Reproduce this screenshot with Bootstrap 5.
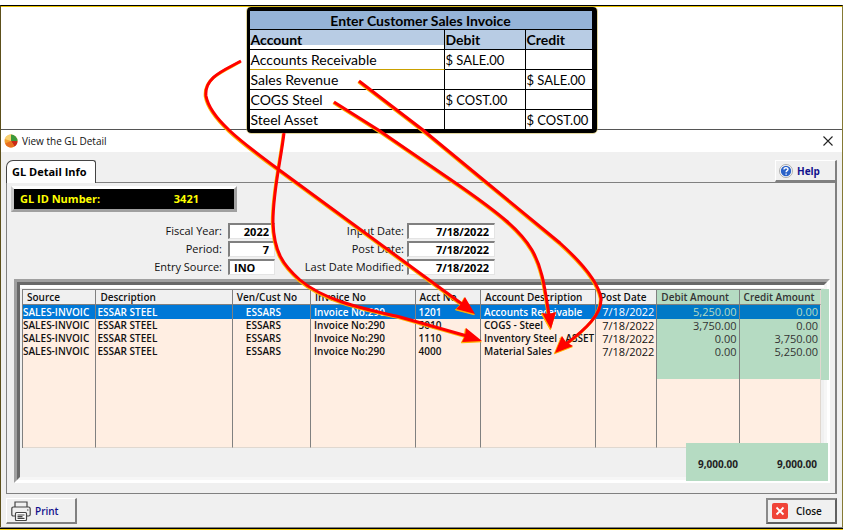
<!DOCTYPE html>
<html lang="en">
<head>
<meta charset="utf-8">
<meta name="viewport" content="width=device-width, initial-scale=1">
<title>View the GL Detail</title>
<link href="https://cdn.jsdelivr.net/npm/bootstrap@5.3.0/dist/css/bootstrap.min.css" rel="stylesheet">
<style>
body{font-family:"Open Sans","Noto Sans",sans-serif;font-size:11px;line-height:14px;color:#111;background:#fff}
.page{margin-top:5px;border-top:1px solid #000;border-left:1px solid #5c4f1a;border-right:1px solid #857a35;box-shadow:inset 0 1px #e8c000}
.page-end{height:3px;background:#000;border-top:1px solid #808080;border-bottom:1px solid #f0c800}
/* journal entry sheet */
.sheet{width:350px;border:solid #000;border-width:4px 5px 4px 3px;border-radius:4px;margin:1px auto -4px;position:relative;z-index:2;background:#fff;outline:1px solid #c8b04080}
.sheet table{font-family:Lato,sans-serif;font-size:14px;line-height:18px;color:#000;table-layout:fixed;border-collapse:separate;border-spacing:0}
.sheet th,.sheet td{height:20px;padding:1px 1px 0 1px;border-right:1px solid #000;border-bottom:1px solid #000;white-space:nowrap}
.sheet td+td{font-size:13px}
.sheet tr>:last-child{border-right:0}
.sheet tbody tr:last-child td{border-bottom:0;height:19px}
.sheet .title-row th{height:19px;line-height:17px;background:#95b3d7;text-align:center}
.sheet .head-row th{background:#b8cce4}
.sheet .head-row th:first-child{background:linear-gradient(#b8cce4 15px,#fff 15px)}
.sheet .gold td:first-child{border-bottom-color:#c9a000}
/* window */
.win{background:#f0f0f0;border-top:1px solid #555;padding-bottom:3px}
.titlebar{background:#fff;height:22px;padding:0 9px 0 3px;font-size:10px}
.win-body{padding:4px 5px 0}
.bare{border:0;background:none;padding:0;line-height:0}
.tabs{border:0;margin-bottom:-1px}
.tabs .nav-link{border:1px solid #444!important;border-bottom:0!important;border-radius:7px 3px 0 0;background:#fff!important;color:#000!important;font-weight:700;font-size:11px;line-height:16px;padding:3px 8px 4px 5px;height:23px;margin:0}
.tool{background:#f0f0f0;border:1px solid #fff;border-right:2px solid #808080;border-bottom:2px solid #808080;color:#10108c;font-weight:600;font-size:10px;line-height:14px;border-radius:0;white-space:nowrap}
.help{width:62px;height:22px;padding:0 3px;font-weight:700}
.print{width:71px;height:26px;padding:0 4px}
.close-tool{width:71px;height:26px;padding:0 4px;border:2px solid #8a8a8a;border-right-color:#606060;border-bottom-color:#606060;color:#111}
.panel{border:1px solid #808080;border-right-width:2px;padding:3px 5px 10px 6px}
.gl-id{width:226px;border:3px solid #a0a0a0;border-top-color:#fff;border-left-color:#c8c8c8;background:#a0a0a0;margin-left:-2px}
.gl-id div{background:#000;color:#ff0;font-weight:700;font-size:11px;height:20px;line-height:20px;padding:0 35px 0 6px}
.fields{display:grid;grid-template-columns:215px 47px 132px 88px;gap:2px 0;padding-top:11px;align-items:center}
.fields label{text-align:right;padding-right:6px;font-size:11px;line-height:16px;white-space:nowrap}
.fields label.late{padding-right:3px}
.fields input{width:100%;height:16px;border:1px solid #e4e4e4;border-top:2px solid #808080;border-left:2px solid #808080;border-radius:0;background:#fff;font-weight:700;font-size:11px;line-height:13px;padding:0 5px;color:#000;text-align:right}
.fields input.src{text-align:left;padding:0 4px}
.frame-a{border:3px solid #a0a0a0;border-right-color:#fff;border-bottom-color:#fff;margin-top:4px;margin-left:1px}
.frame-b{border:3px solid #696969;border-right-color:#f6f6f6;border-bottom-color:#f6f6f6;padding:4px 3px 29px 2px;position:relative;box-shadow:inset 0 3px #fff}
.ledger{table-layout:fixed;border-collapse:separate;border-spacing:0;border-top:1px solid #808080;border-left:1px solid #808080;position:relative;z-index:1;font-weight:600;font-size:10px;color:#111}
.ledger th,.ledger td{padding:0 1px 0 3px;border-right:1px solid #808080;white-space:nowrap;height:13px;line-height:13px;background:#ffeee2}
.ledger td:first-child{padding:0}
.ledger td:nth-child(2){padding-left:1px}
.ledger th{height:15px;line-height:14px;background:#f0f0f0;font-weight:600;padding-left:4px;border-bottom:1px solid #808080}
.ledger .num{text-align:right;font-size:11px;font-weight:500;padding-right:2px}
.ledger .hl{background:#b5dbc2;color:#333}
.ledger tr>:last-child{border-right-color:#e0d8d0}
.ledger .sel td{height:14px;line-height:14px;background:#0078d7;color:#fff}
.ledger .sel .hl{background:#0079c6;color:#b5dbc2}
.ledger .cust{padding-left:13px}
.ledger .gap-s td{height:21px}
.ledger .gap-l td{height:69px;border-bottom:1px solid #e0d8d0}
.mark-top{position:absolute;top:4px;right:-5px;width:12px;height:91px;background:#b5dbc2}
.totals{position:absolute;right:-4px;bottom:-4px;width:142px;height:38px;background:#b5dbc2;z-index:2;font-weight:700;font-size:10px;color:#222;padding:4px 11px 0 12px}
.arrows{left:0;top:0;width:100%;height:530px;z-index:5;pointer-events:none}
</style>
<script src="https://cdn.jsdelivr.net/npm/bootstrap@5.3.0/dist/js/bootstrap.bundle.min.js"></script>
</head>
<body class="position-relative">
<div class="page">
  <div class="sheet">
    <table class="w-100">
      <colgroup><col style="width:195px"><col style="width:81px"><col></colgroup>
      <thead>
        <tr class="title-row"><th colspan="3">Enter Customer Sales Invoice</th></tr>
        <tr class="head-row"><th>Account</th><th>Debit</th><th>Credit</th></tr>
      </thead>
      <tbody>
        <tr class="gold"><td>Accounts Receivable</td><td>$ SALE.00</td><td></td></tr>
        <tr><td>Sales Revenue</td><td></td><td>$ SALE.00</td></tr>
        <tr><td>COGS Steel</td><td>$ COST.00</td><td></td></tr>
        <tr><td>Steel Asset</td><td></td><td>$ COST.00</td></tr>
      </tbody>
    </table>
  </div>
  <main class="win">
    <header class="titlebar d-flex align-items-center">
      <svg width="14" height="14" viewBox="0 0 14 14" aria-hidden="true"><circle cx="7" cy="7" r="6.5" fill="#f4a030"/><path d="M7 7V.5A6.500 6.500 0 0 0 .8 5z" fill="#f8d070"/><path d="M7 7V.5A6.500 6.500 0 0 1 13.500 7z" fill="#3c9a3c"/><path d="M7 7h6.500a6.500 6.500 0 0 1-3 5.500z" fill="#c82818"/><path d="M7 7L1 9.500a6.500 6.500 0 0 0 9.500 3z" fill="#e87020"/></svg>
      <span class="ms-1 flex-grow-1">View the GL Detail</span>
      <button type="button" class="bare" aria-label="Close window"><svg width="10" height="10" viewBox="0 0 10 10"><path d="M.5.5l9 9m0-9l-9 9" stroke="#222" stroke-width="1.100"/></svg></button>
    </header>
    <div class="win-body">
      <div class="d-flex justify-content-between pt-1">
        <ul class="nav nav-tabs tabs" role="tablist"><li class="nav-item"><button type="button" role="tab" class="nav-link active">GL Detail Info</button></li></ul>
        <button type="button" class="tool help d-flex align-items-center gap-1">
          <svg width="14" height="14" viewBox="0 0 14 14" aria-hidden="true"><circle cx="7" cy="7" r="6.500" fill="#fff" stroke="#999" stroke-width=".8"/><circle cx="7" cy="7" r="5.200" fill="#2a62c8"/><path d="M5 5.500C5 3.200 9 3.200 9 5.300 9 6.700 7.100 6.600 7.100 8.300M7.100 9.500v1.300" fill="none" stroke="#fff" stroke-width="1.400"/></svg>Help</button>
      </div>
      <section class="panel">
        <div class="gl-id"><div class="d-flex justify-content-between"><span>GL ID Number:</span><span>3421</span></div></div>
        <form class="fields">
          <label for="fy">Fiscal Year:</label><input id="fy" value="2022">
          <label class="late" for="ind">Input Date:</label><input id="ind" value="7/18/2022">
          <label for="pe">Period:</label><input id="pe" value="7">
          <label class="late" for="pd">Post Date:</label><input id="pd" value="7/18/2022">
          <label for="es">Entry Source:</label><input id="es" class="src" value="INO">
          <label class="late" for="lm">Last Date Modified:</label><input id="lm" value="7/18/2022">
        </form>
        <div class="frame-a"><div class="frame-b">
          <div class="mark-top"></div>
          <table class="ledger w-100">
            <colgroup><col style="width:9.200%"><col style="width:17.100%"><col style="width:9.800%"><col style="width:13.100%"><col style="width:8.200%"><col style="width:14.400%"><col style="width:7.700%"><col style="width:10.300%"><col></colgroup>
            <thead><tr><th>Source</th><th>Description</th><th>Ven/Cust No</th><th>Invoice No</th><th>Acct No</th><th>Account Description</th><th>Post Date</th><th class="hl">Debit Amount</th><th class="hl">Credit Amount</th></tr></thead>
            <tbody>
              <tr class="sel"><td>SALES-INVOIC</td><td>ESSAR STEEL</td><td class="cust">ESSARS</td><td>Invoice No:290</td><td>1201</td><td>Accounts Receivable</td><td class="num">7/18/2022</td><td class="num hl">5,250.00</td><td class="num hl">0.00</td></tr>
              <tr><td>SALES-INVOIC</td><td>ESSAR STEEL</td><td class="cust">ESSARS</td><td>Invoice No:290</td><td>5010</td><td>COGS - Steel</td><td class="num">7/18/2022</td><td class="num hl">3,750.00</td><td class="num hl">0.00</td></tr>
              <tr><td>SALES-INVOIC</td><td>ESSAR STEEL</td><td class="cust">ESSARS</td><td>Invoice No:290</td><td>1110</td><td>Inventory Steel - ASSET</td><td class="num">7/18/2022</td><td class="num hl">0.00</td><td class="num hl">3,750.00</td></tr>
              <tr><td>SALES-INVOIC</td><td>ESSAR STEEL</td><td class="cust">ESSARS</td><td>Invoice No:290</td><td>4000</td><td>Material Sales</td><td class="num">7/18/2022</td><td class="num hl">0.00</td><td class="num hl">5,250.00</td></tr>
              <tr class="gap-s"><td></td><td></td><td></td><td></td><td></td><td></td><td></td><td class="hl"></td><td class="hl"></td></tr>
              <tr class="gap-l"><td></td><td></td><td></td><td></td><td></td><td></td><td></td><td></td><td></td></tr>
            </tbody>
          </table>
          <div class="totals d-flex justify-content-between align-items-center"><span>9,000.00</span><span>9,000.00</span></div>
        </div></div>
      </section>
      <footer class="d-flex justify-content-between pt-1">
        <button type="button" class="tool print d-flex align-items-center gap-1">
          <svg width="20" height="20" viewBox="0 0 20 20" fill="none" stroke="#444" stroke-width="1.200" aria-hidden="true"><path d="M4 6V1h12v5M4 15H2.500Q.8 15 .8 13.500V8Q.8 6 2.500 6h15q1.700 0 1.700 2v5.500q0 1.500-1.700 1.500H16"/><rect x="4.500" y="11.500" width="11" height="8" rx="1" fill="#fff"/><path d="M6.500 14h7M6.500 15.700h5M6.500 17.400h7M16 9h1.500"/></svg>Print</button>
        <button type="button" class="tool close-tool d-flex align-items-center gap-2">
          <svg width="16" height="16" viewBox="0 0 16 16" aria-hidden="true"><rect width="16" height="16" rx="2" fill="#f04438"/><path d="M4.500 4.500l7 7m0-7l-7 7" stroke="#fff" stroke-width="1.800"/></svg>Close</button>
      </footer>
    </div>
  </main>
</div>
<div class="page-end"></div>
<svg class="arrows position-absolute" viewBox="0 0 843 530" preserveAspectRatio="none" aria-hidden="true">
  <defs>
    <g id="flow">
      <path d="M241 61C225 70 204 77 206 96C210 118 240 141 278 169L462 304"/>
      <path d="M334 102L380 131L460 186C500 214 520 230 532 250C543 269 545 290 549 315"/>
      <path d="M359 81L423 130L560 243C580 261 598 281 601 298C602 314 586 329 566 344"/>
      <path d="M284 133C281 160 273 190 273 222C274 252 283 265 300 280C326 302 370 310 400 317L467 336"/>
    </g>
    <g id="heads"><path d="M475 314l-19-5 5-5 4-7z"/><path d="M551 329l-9-16 7 1 7-2z"/><path d="M555 353l7-17 4 6 7 4z"/><path d="M482 341l-20 1 3-6 1-8z"/></g>
  </defs>
  <g transform="translate(-.7 .8)"><use href="#flow" fill="none" stroke="#ffb000" stroke-width="3"/><use href="#heads" fill="#ffb000" stroke="#ffb000"/></g>
  <use href="#flow" fill="none" stroke="#f00" stroke-width="3"/>
  <use href="#heads" fill="#f00"/>
</svg>
</body>
</html>
